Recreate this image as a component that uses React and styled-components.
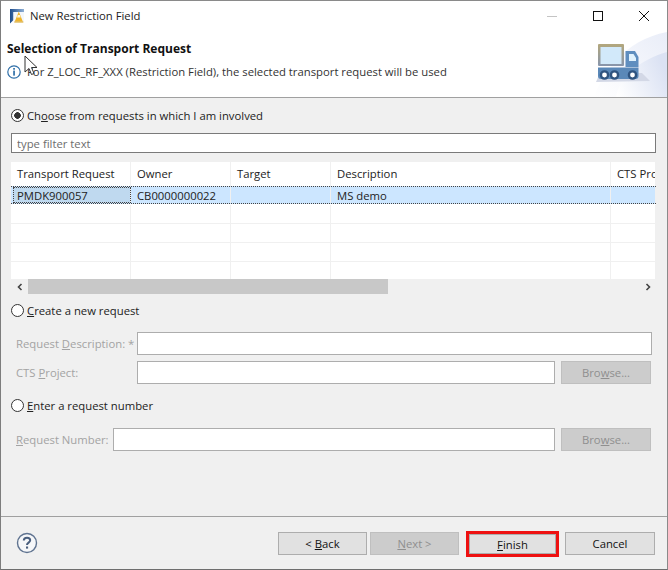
import React from 'react';
import styled, { createGlobalStyle } from 'styled-components';

const GlobalStyle = createGlobalStyle`
  html, body { margin: 0; padding: 0; background: #f0f0f0; }
  body { font-family: "Open Sans", "Noto Sans", "Liberation Sans", sans-serif; font-size: 11.3px; color: #1a1a1a; }
`;

const columns = [
  { title: 'Transport Request', width: 120, value: 'PMDK900057', focus: true },
  { title: 'Owner', width: 100, value: 'CB0000000022' },
  { title: 'Target', width: 100, value: '' },
  { title: 'Description', width: 280, value: 'MS demo' },
  { title: 'CTS Project', width: 45, value: '' },
];

function AppIcon() {
  return (
    <svg width="16" height="16" viewBox="0 0 16 16">
      <defs>
        <linearGradient id="edge" x1="0" y1="0" x2="1" y2="0">
          <stop offset="0" stopColor="#1d4c8c" />
          <stop offset="1" stopColor="#8fb0d6" />
        </linearGradient>
      </defs>
      <path d="M1 1h14v3H4.500v8L1 15.500z" fill="url(#edge)" />
      <path d="M4.500 4H15v10.500H4.500z" fill="#f4f7fb" />
      <path d="M9.800 3.500l4 10H5.800z" fill="#efb42c" />
      <path d="M8.700 7h2.200l.7 2.500H8z" fill="#fff6d8" />
      <path d="M5.300 13.500h9v1h-9z" fill="#d9a21f" />
    </svg>
  );
}

function InfoIcon() {
  return (
    <svg width="14" height="14" viewBox="0 0 14 14">
      <circle cx="7" cy="7" r="6.200" fill="#fff" stroke="#2f6fa8" strokeWidth="1.200" />
      <rect x="6.200" y="5.600" width="1.700" height="5" fill="#2f6fa8" />
      <rect x="6.200" y="3" width="1.700" height="1.700" fill="#2f6fa8" />
    </svg>
  );
}

function TruckBanner() {
  return (
    <svg width="75" height="67" viewBox="0 0 75 67">
      <defs>
        <linearGradient id="wash" x1="0" y1="0.9" x2="1" y2="0.5">
          <stop offset="0" stopColor="#ffffff" />
          <stop offset="1" stopColor="#dbe2f3" />
        </linearGradient>
        <linearGradient id="band" x1="0" y1="1" x2="1" y2="0">
          <stop offset="0" stopColor="#ffffff" />
          <stop offset="1" stopColor="#e9edf8" />
        </linearGradient>
        <linearGradient id="box" x1="0" y1="0" x2="0" y2="1">
          <stop offset="0" stopColor="#b3a77c" />
          <stop offset="1" stopColor="#8795ac" />
        </linearGradient>
      </defs>
      <path d="M2 67C10 44 32 10 75 2V67z" fill="url(#band)" />
      <path d="M24 67C28 46 48 30 75 22V67z" fill="url(#wash)" />
      <path d="M4 52L58 51 50 43H8z" fill="#d3d8e6" />
      <rect x="6" y="14" width="26" height="22" rx="1" fill="url(#box)" />
      <rect x="8.500" y="17" width="21" height="17" fill="#d2e9fa" />
      <path d="M33.500 21H43l3.500 6v10H33.500z" fill="#5f8ebf" />
      <path d="M37 24h4.500l2.500 4v3h-7z" fill="#e0f2fd" />
      <path d="M6 37.500h40.500V46a3 3 0 0 1-3 3H9a3 3 0 0 1-3-3z" fill="#5a88b8" />
      <circle cx="12.500" cy="45" r="3.600" fill="#fff" stroke="#2f5480" strokeWidth="2.400" />
      <circle cx="22.500" cy="45" r="3.600" fill="#fff" stroke="#2f5480" strokeWidth="2.400" />
      <circle cx="40.500" cy="45" r="3.600" fill="#fff" stroke="#2f5480" strokeWidth="2.400" />
    </svg>
  );
}

function HelpIcon() {
  return (
    <svg width="22" height="22" viewBox="0 0 22 22">
      <circle cx="11" cy="11" r="9.500" fill="#f6f7f9" stroke="#5f7390" strokeWidth="1.400" />
      <path d="M7.800 8.500C7.800 6.700 9.200 5.700 11 5.700s3.200 1 3.200 2.600c0 2.300-3.200 2.400-3.200 4.700" fill="none" stroke="#4a5f7e" strokeWidth="2" />
      <rect x="10" y="14.500" width="2.100" height="2.100" fill="#4a5f7e" />
    </svg>
  );
}

function Cursor() {
  return (
    <svg width="14" height="22" viewBox="0 0 14 22">
      <path d="M1 1v16l4-3.500 2.500 6 2.500-1-2.500-6H13z" fill="#fff" stroke="#333" strokeWidth="1" />
    </svg>
  );
}

export default function App() {
  return (
    <>
      <GlobalStyle />
      <Dialog>
        <TitleBar>
          <AppIcon />
          <TitleText>New Restriction Field</TitleText>
          <WindowButtons>
            <WindowButton>
              <svg width="12" height="12" viewBox="0 0 12 12"><path d="M1 6.500h10" stroke="#c4c4c4" /></svg>
            </WindowButton>
            <WindowButton>
              <svg width="12" height="12" viewBox="0 0 12 12"><rect x="1.500" y="1.500" width="9" height="9" fill="none" stroke="#111" /></svg>
            </WindowButton>
            <WindowButton>
              <svg width="12" height="12" viewBox="0 0 12 12"><path d="M1 1l10 10M11 1L1 11" stroke="#111" /></svg>
            </WindowButton>
          </WindowButtons>
        </TitleBar>

        <Banner>
          <BannerText>
            <BannerTitle>Selection of Transport Request</BannerTitle>
            <BannerInfo>
              <InfoIcon />
              <span>For Z_LOC_RF_XXX (Restriction Field), the selected transport request will be used</span>
            </BannerInfo>
          </BannerText>
          <TruckBanner />
          <PointerOverlay><Cursor /></PointerOverlay>
        </Banner>

        <Body>
          <RadioRow $height={35}>
            <Radio $checked />
            <span>Ch<u>o</u>ose from requests in which I am involved</span>
          </RadioRow>
          <FilterInput readOnly value="type filter text" />

          <TableWrap>
            <HeaderRow>
              {columns.map((c) => (
                <HeaderCell key={c.title} $width={c.width}>{c.title}</HeaderCell>
              ))}
            </HeaderRow>
            <SelectedRow>
              {columns.map((c) => (
                <SelectedCell key={c.title} $width={c.width} $focus={c.focus}>{c.value}</SelectedCell>
              ))}
            </SelectedRow>
            {[0, 1, 2, 3].map((r) => (
              <EmptyRow key={r}>
                {columns.map((c) => (
                  <EmptyCell key={c.title} $width={c.width} />
                ))}
              </EmptyRow>
            ))}
          </TableWrap>

          <ScrollBar>
            <ScrollArrow>
              <svg width="8" height="8" viewBox="0 0 8 8"><path d="M5.500 1L2.500 4l3 3" fill="none" stroke="#444" strokeWidth="1.600" /></svg>
            </ScrollArrow>
            <ScrollThumb />
            <ScrollArrow>
              <svg width="8" height="8" viewBox="0 0 8 8"><path d="M2.500 1l3 3-3 3" fill="none" stroke="#444" strokeWidth="1.600" /></svg>
            </ScrollArrow>
          </ScrollBar>

          <RadioRow $height={33} $after={5}>
            <Radio />
            <span><u>C</u>reate a new request</span>
          </RadioRow>
          <FieldRow>
            <FieldLabel $width={121}>Request <u>D</u>escription: *</FieldLabel>
            <TextBox $width={515} />
          </FieldRow>
          <FieldRow>
            <FieldLabel $width={121}>CTS <u>P</u>roject:</FieldLabel>
            <TextBox $width={418} />
            <BrowseButton>Bro<u>w</u>se...</BrowseButton>
          </FieldRow>
          <RadioRow $height={31} $after={7}>
            <Radio />
            <span><u>E</u>nter a request number</span>
          </RadioRow>
          <FieldRow>
            <FieldLabel $width={97}><u>R</u>equest Number:</FieldLabel>
            <TextBox $width={442} />
            <BrowseButton>Bro<u>w</u>se...</BrowseButton>
          </FieldRow>
        </Body>

        <Footer>
          <HelpSlot><HelpIcon /></HelpSlot>
          <FooterButton $width={89}>&lt; <u>B</u>ack</FooterButton>
          <FooterButton $width={89} $disabled $gap={3}><u>N</u>ext &gt;</FooterButton>
          <FinishMark>
            <FooterButton $width={87} $height={20}><u>F</u>inish</FooterButton>
          </FinishMark>
          <FooterButton $width={90} $gap={6}>Cancel</FooterButton>
        </Footer>
      </Dialog>
    </>
  );
}

const Dialog = styled.div`
  width: 668px;
  height: 570px;
  box-sizing: border-box;
  display: flex;
  flex-direction: column;
  background: #f0f0f0;
  border-top: 1px solid #8a8a8a;
  border-left: 1px solid #7d7d7d;
  border-right: 1px solid #8a8a8a;
  border-bottom: 1px solid #6e6e6e;
  overflow: hidden;
`;

const TitleBar = styled.div`
  height: 29px;
  flex: none;
  display: flex;
  align-items: center;
  padding: 0 0 0 8px;
  background: #fff;
`;

const TitleText = styled.div`
  margin-left: 5px;
  color: #222;
`;

const WindowButtons = styled.div`
  margin-left: auto;
  display: flex;
`;

const WindowButton = styled.div`
  width: 46px;
  height: 29px;
  display: flex;
  align-items: center;
  justify-content: center;
`;

const Banner = styled.div`
  position: relative;
  height: 68px;
  box-sizing: border-box;
  flex: none;
  display: flex;
  justify-content: space-between;
  background: #fff;
  border-bottom: 1px solid #a0a0a0;
`;

const BannerText = styled.div`
  padding: 10px 0 0 6px;
`;

const BannerTitle = styled.div`
  font-weight: 700;
  font-size: 12px;
  color: #111;
`;

const BannerInfo = styled.div`
  display: flex;
  align-items: center;
  gap: 6px;
  margin-top: 7px;
  color: #333;
`;

const PointerOverlay = styled.div`
  position: absolute;
  left: 23px;
  top: 25px;
  line-height: 0;
`;

const Body = styled.div`
  flex: 1;
  display: flex;
  flex-direction: column;
  padding-left: 10px;
`;

const RadioRow = styled.div`
  height: ${(p) => p.$height}px;
  margin-bottom: ${(p) => p.$after || 0}px;
  flex: none;
  display: flex;
  align-items: center;
  gap: 3px;
  color: #222;
`;

const Radio = styled.span`
  width: 11px;
  height: 11px;
  flex: none;
  border: 1px solid #333;
  border-radius: 50%;
  background: ${(p) => (p.$checked ? 'radial-gradient(circle, #333 0 3px, #fff 3.6px)' : '#fff')};
`;

const FilterInput = styled.input`
  width: 645px;
  height: 20px;
  box-sizing: border-box;
  flex: none;
  padding: 0 5px;
  border: 1px solid #7a7a7a;
  background: #fff;
  font: inherit;
  color: #6d6d6d;
  outline: none;
`;

const TableWrap = styled.div`
  width: 645px;
  margin-top: 9px;
  flex: none;
  background: #fff;
  overflow: hidden;
`;

const HeaderRow = styled.div`
  display: flex;
  height: 24px;
`;

const HeaderCell = styled.div`
  width: ${(p) => p.$width}px;
  flex: none;
  box-sizing: border-box;
  padding-left: 6px;
  line-height: 23px;
  white-space: nowrap;
  overflow: hidden;
  border-right: 1px solid #f0f0f0;
  color: #222;
`;

const SelectedRow = styled.div`
  display: flex;
  height: 18px;
  margin-bottom: 1px;
  background: #cce6ff;
  border-top: 1px dotted #444;
  border-bottom: 1px dotted #444;
  box-sizing: border-box;
`;

const SelectedCell = styled.div`
  width: ${(p) => (p.$focus ? p.$width - 2 : p.$width)}px;
  margin-left: ${(p) => (p.$focus ? 2 : 0)}px;
  flex: none;
  box-sizing: border-box;
  padding-left: ${(p) => (p.$focus ? 4 : 6)}px;
  line-height: 18px;
  white-space: nowrap;
  border-right: 1px solid #f0f0f0;
  color: #222;
  background: ${(p) => (p.$focus ? '#bfd9ef' : 'transparent')};
  outline: ${(p) => (p.$focus ? '1px dotted #444' : 'none')};
  outline-offset: -1px;
`;

const EmptyRow = styled.div`
  display: flex;
  height: 19px;
  box-sizing: border-box;
  border-bottom: 1px solid #f0f0f0;
  &:last-child { height: 17px; border-bottom: 0; }
`;

const EmptyCell = styled.div`
  width: ${(p) => p.$width}px;
  flex: none;
  box-sizing: border-box;
  border-right: 1px solid #f0f0f0;
`;

const ScrollBar = styled.div`
  width: 645px;
  height: 15px;
  flex: none;
  display: flex;
  justify-content: space-between;
`;

const ScrollArrow = styled.div`
  width: 17px;
  display: flex;
  align-items: center;
  justify-content: center;
`;

const ScrollThumb = styled.div`
  width: 360px;
  background: #c8c8c8;
  margin-right: auto;
`;

const FieldRow = styled.div`
  display: flex;
  align-items: center;
  height: 23px;
  margin-bottom: 6px;
  padding-left: 5px;
  flex: none;
`;

const FieldLabel = styled.div`
  width: ${(p) => p.$width}px;
  flex: none;
  color: #a3a3a3;
  white-space: nowrap;
`;

const TextBox = styled.div`
  width: ${(p) => p.$width}px;
  height: 23px;
  box-sizing: border-box;
  flex: none;
  background: #fff;
  border: 1px solid #adadad;
`;

const BrowseButton = styled.div`
  width: 90px;
  height: 23px;
  margin-left: 6px;
  box-sizing: border-box;
  flex: none;
  display: flex;
  align-items: center;
  justify-content: center;
  white-space: pre;
  background: #cccccc;
  border: 1px solid #bfbfbf;
  color: #8f8f8f;
`;

const Footer = styled.div`
  height: 53px;
  flex: none;
  box-sizing: border-box;
  display: flex;
  align-items: flex-start;
  padding: 15px 12px 0 0;
  border-top: 1px solid #a0a0a0;
`;

const HelpSlot = styled.div`
  margin: 0 auto 0 15px;
  line-height: 0;
`;

const FooterButton = styled.div`
  width: ${(p) => p.$width}px;
  height: ${(p) => p.$height || 23}px;
  margin-left: ${(p) => p.$gap || 0}px;
  box-sizing: border-box;
  display: flex;
  align-items: center;
  justify-content: center;
  white-space: pre;
  border: 1px solid ${(p) => (p.$disabled ? '#bfbfbf' : '#adadad')};
  background: ${(p) => (p.$disabled ? '#cccccc' : '#e1e1e1')};
  color: ${(p) => (p.$disabled ? '#8f8f8f' : '#111')};
`;

const FinishMark = styled.div`
  margin: -1px 0 0 7px;
  border: 3px solid #ee1111;
`;
